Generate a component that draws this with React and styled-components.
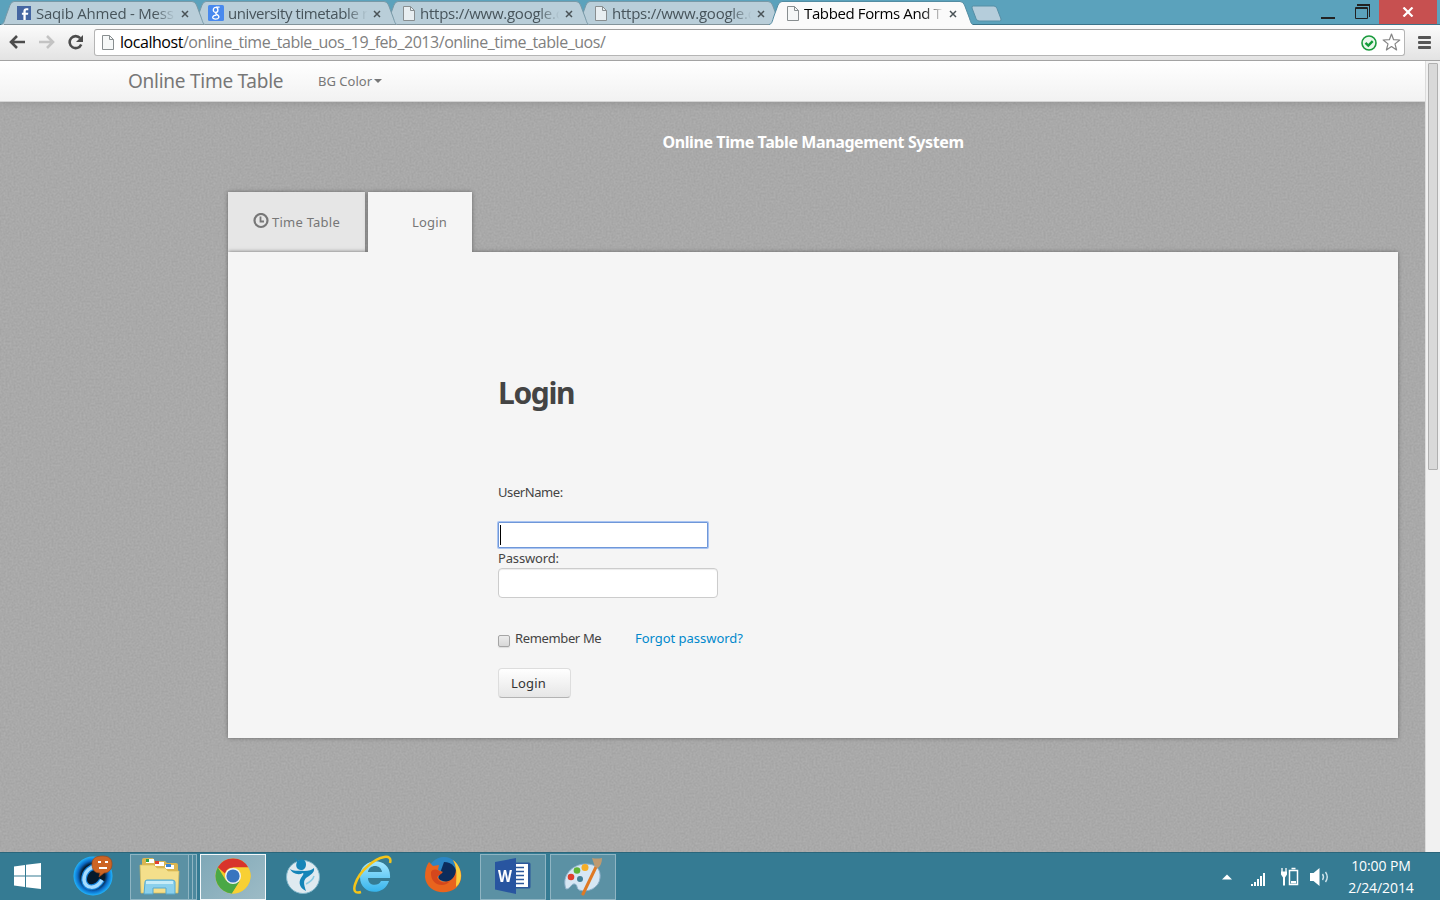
import React from 'react';
import styled, { createGlobalStyle, css } from 'styled-components';

const ui = '"Open Sans", "Noto Sans", sans-serif';
const pt = '"Noto Sans", "Open Sans", sans-serif';

const Global = createGlobalStyle`
  * { box-sizing: border-box; }
  body { margin: 0; overflow: hidden; font-family: ${pt}; }
  button, input { font: inherit; }
`;

const Screen = styled.div`
  width: 1440px;
  height: 900px;
  display: flex;
  flex-direction: column;
  overflow: hidden;
`;

/* ---------- browser chrome ---------- */
const TabStrip = styled.header`
  height: 25px;
  flex: none;
  display: flex;
  padding-left: 1px;
  background: #5ba2bc;
  box-shadow: inset 0 -1px #3c7389;
  position: relative;
`;

const BrowserTab = styled.div`
  position: relative;
  z-index: ${(p) => p.$z};
  width: 204px;
  height: 25px;
  margin-right: -12px;
  padding: 5px 0 4px ${(p) => p.$pad}px;
  display: flex;
  align-items: center;
  font: 15px/16px ${ui};
  letter-spacing: ${(p) => p.$ls}px;
  color: ${(p) => (p.$active ? '#000' : '#47545b')};
`;

const TabShape = styled.svg`
  position: absolute;
  left: 0;
  top: 0;
`;

const TabIcon = styled.span`
  position: relative;
  display: flex;
  flex: none;
  width: ${(p) => p.$w}px;
`;

const TabTitle = styled.span`
  position: relative;
  width: 141px;
  flex: none;
  overflow: hidden;
  white-space: nowrap;
  line-height: 20px;
  margin-top: -1px;
  mask-image: linear-gradient(to right, #000 84%, transparent 99%);
`;

const CloseGlyph = styled.svg`
  position: absolute;
  left: 180px;
  top: 10px;
`;

const NewTab = styled.svg`
  margin: 5px 0 0 9px;
`;

const WindowButtons = styled.div`
  margin-left: auto;
  display: flex;
`;

const WinButton = styled.div`
  display: flex;
  align-items: center;
  justify-content: center;
  width: ${(p) => p.$w}px;
  height: 24px;
  padding-bottom: 1px;
  background: ${(p) => (p.$close ? '#c75050' : 'transparent')};
  margin-right: ${(p) => (p.$close ? 3 : 0)}px;
`;

const Toolbar = styled.div`
  height: 36px;
  flex: none;
  display: flex;
  align-items: center;
  padding: 0 8px 1px 9px;
  background: linear-gradient(#fbfbfb, #e3e3e3);
  border-bottom: 1px solid #a3a3a3;
`;

const NavIcons = styled.div`
  display: flex;
  gap: 12px;
  width: 85px;
  align-items: center;
`;

const Omnibox = styled.div`
  width: 1311px;
  height: 27px;
  display: flex;
  align-items: center;
  padding: 0 3px 0 7px;
  background: #fff;
  border: 1px solid #b5b5b5;
  border-top-color: #a0a0a0;
  border-radius: 3px;
`;

const Url = styled.span`
  font: 16px/24px ${ui};
  color: #808080;
  letter-spacing: -0.455px;
  margin-left: 6px;
  flex: 1;
  b { font-weight: 400; color: #000; }
`;

const OmniIcons = styled.span`
  display: flex;
  align-items: center;
  gap: 5px;
`;

const MenuLines = styled.div`
  width: 13px;
  height: 13px;
  margin-left: 13px;
  display: flex;
  flex-direction: column;
  justify-content: space-between;
  i { height: 3px; border-radius: 1px; background: #555; }
`;

/* ---------- web page ---------- */
const Viewport = styled.div`
  height: 791px;
  flex: none;
  display: flex;
`;

const Page = styled.main`
  width: 1425px;
  position: relative;
  background: #a8a8a8;
  overflow: hidden;
`;

const Texture = styled.svg`
  position: absolute;
  inset: 0;
`;

const Navbar = styled.nav`
  position: relative;
  height: 41px;
  display: flex;
  align-items: center;
  padding-left: 128px;
  background: linear-gradient(#fff, #f2f2f2);
  border-bottom: 1px solid #d4d4d4;
  box-shadow: 0 1px 8px rgba(0, 0, 0, 0.13);
  color: #777;
`;

const Text = styled.span`
  font-size: ${(p) => p.$size || 13}px;
  line-height: 20px;
  letter-spacing: ${(p) => p.$ls || 0}px;
  white-space: nowrap;
`;

const Brand = styled(Text)`
  width: 190px;
`;

const Caret = styled.i`
  border: 4px solid transparent;
  border-top-color: #777;
  border-bottom: 0;
  margin-left: 2px;
`;

const Container = styled.div`
  position: relative;
  width: 1170px;
  margin-left: 228px;
`;

const PageTitle = styled.h1`
  margin: 0;
  padding-top: 30px;
  height: 90px;
  text-align: center;
  color: #fff;
  font: 700 16px/20px ${pt};
  letter-spacing: -0.4px;
`;

const FormTabs = styled.div`
  display: flex;
  gap: 3px;
  height: 60px;
`;

const FormTab = styled.div`
  position: relative;
  z-index: ${(p) => (p.$active ? 2 : 0)};
  width: ${(p) => p.$w}px;
  padding-left: ${(p) => p.$pad}px;
  display: flex;
  align-items: center;
  gap: 3px;
  color: #777;
  background: ${(p) => (p.$active ? '#f5f5f5' : '#e6e6e6')};
  box-shadow: 0 0 4px #666;
  ${(p) => p.$active && css`clip-path: inset(-6px -6px 0 -6px);`}
`;

const Panel = styled.section`
  position: relative;
  z-index: 1;
  height: 486px;
  background: #f5f5f5;
  box-shadow: 0 0 4px #666;
  padding: 121px 0 0 270px;
  display: flex;
  flex-direction: column;
  align-items: flex-start;
  color: #444;
`;

const FormTitle = styled.h2`
  margin: 0 0 69px;
  font: 700 30px/40px ${pt};
  letter-spacing: -1.35px;
`;

const Field = styled.input`
  display: block;
  outline: none;
  background: #fff;
  ${(p) => p.$focus ? css`
    width: 210px;
    height: 26px;
    margin: 20px 0 0;
    border: 1px solid #6f97d8;
    box-shadow: 0 0 0 1px #a9c4f2;
    border-radius: 1px;
  ` : css`
    width: 220px;
    height: 30px;
    border: 1px solid #ccc;
    border-radius: 4px;
    box-shadow: inset 0 1px 1px rgba(0, 0, 0, 0.075);
  `}
`;

const FocusWrap = styled.div`
  position: relative;
  &::after {
    content: '';
    position: absolute;
    left: 2px;
    bottom: 3px;
    width: 1px;
    height: 20px;
    background: #000;
  }
`;

const Options = styled.div`
  margin-top: 30px;
  height: 20px;
  display: flex;
  align-items: center;
`;

const Check = styled.span`
  width: 12px;
  height: 12px;
  margin: 5px 5px 0 0;
  border: 1px solid #a5a5a5;
  border-radius: 2px;
  background: linear-gradient(#ececec, #d8d8d8);
  box-shadow: 0 1px 1px #ddd;
`;

const Remember = styled(Text)`
  width: 120px;
`;

const Forgot = styled(Text)`
  color: #0088cc;
`;

const Submit = styled.button`
  margin-top: 20px;
  width: 73px;
  height: 30px;
  padding: 0 0 0 12px;
  text-align: left;
  font: 13px/20px ${pt};
  letter-spacing: 0.2px;
  color: #333;
  border: 1px solid #ddd;
  border-bottom-color: #b3b3b3;
  border-radius: 4px;
  background: linear-gradient(#fff, #e6e6e6);
`;

const ScrollTrack = styled.aside`
  width: 15px;
  background: #f1f1f1;
  border-left: 1px solid #dcdcdc;
  padding: 2px 2px 0;
`;

const ScrollThumb = styled.div`
  width: 10px;
  height: 407px;
  background: #d9d9d9;
  border: 1px solid #b0b0b0;
  border-radius: 1px;
`;

/* ---------- taskbar ---------- */
const Taskbar = styled.footer`
  height: 48px;
  flex: none;
  display: flex;
  align-items: center;
  background: #357b93;
  border-top: 1px solid #2b667b;
`;

const Slot = styled.div`
  width: ${(p) => p.$w || 70}px;
  height: 47px;
  flex: none;
  padding: ${(p) => p.$inset || '0 5px 3px 0'};
  display: flex;
  align-items: center;
  justify-content: center;
`;

const OpenApp = styled.div`
  width: ${(p) => p.$w || 66}px;
  height: 46px;
  flex: none;
  margin-right: ${(p) => (p.$mr === undefined ? 4 : p.$mr)}px;
  padding-bottom: 2px;
  display: flex;
  align-items: center;
  justify-content: center;
  border: 1px solid ${(p) => (p.$active ? '#f4f8fa' : '#8fb5c3')};
  background: ${(p) => (p.$active ? 'linear-gradient(135deg, #7fa8b7, #9dbbc6)' : '#5b91a4')};
`;

const StackEdge = styled.i`
  width: 4px;
  height: 46px;
  border: 1px solid #8fb5c3;
  border-left: 0;
  background: #4d899e;
  margin-right: ${(p) => p.$mr || 0}px;
`;

const Tray = styled.div`
  margin-left: auto;
  display: flex;
  align-items: center;
  height: 47px;
  padding-right: 24px;
`;

const Clock = styled.div`
  width: 70px;
  margin-left: 16px;
  text-align: center;
  color: #fff;
  font: 14px/22px ${ui};
  letter-spacing: -0.08px;
  white-space: nowrap;
  padding-top: 1px;
`;

const FileIcon = () => (
  <svg width="12" height="15" viewBox="0 0 12 15">
    <path d="M.5.5h7l4 4v10H.5z" fill="#f4f6f6" fillOpacity=".8" stroke="#888e90" />
    <path d="M7.5.5v4h4" fill="none" stroke="#888e90" />
  </svg>
);

const FacebookIcon = () => (
  <svg width="14" height="14" viewBox="0 0 14 14">
    <rect width="14" height="14" fill="#4566a2" />
    <path d="M8.7 14V8.8H11l.3-2.100H8.700V5.400c0-.8.4-1.100 1.100-1.100h1.500V2.300H9.400C7.400 2.300 6.400 3.400 6.400 5.200v1.500H4.900v2.100h1.500V14z" fill="#fff" />
  </svg>
);

const GoogleIcon = () => (
  <svg width="16" height="16" viewBox="0 0 16 16">
    <rect width="16" height="16" rx="1.500" fill="#4889ee" />
    <g fill="none" stroke="#fff" strokeWidth="1.300">
      <ellipse cx="7.600" cy="4.900" rx="2.300" ry="2.500" />
      <path d="M11.600 2.200H8M9 7.200c-2 1-1.300 1.700 0 2.400 3.200 1.800 2 4.600-1.400 4.600-4 0-4-3.800.8-4.100" />
    </g>
  </svg>
);

const tabs = [
  { title: 'Saqib Ahmed - Mess', icon: <FacebookIcon />, iw: 19, pad: 16, ls: -0.22 },
  { title: 'university timetable r', icon: <GoogleIcon />, iw: 20, pad: 15, ls: -0.4 },
  { title: 'https://www.google.c', icon: <FileIcon />, iw: 17, pad: 18, ls: -0.25 },
  { title: 'https://www.google.c', icon: <FileIcon />, iw: 17, pad: 18, ls: -0.25 },
  { title: 'Tabbed Forms And T', icon: <FileIcon />, iw: 17, pad: 18, active: true, ls: -0.38 },
];

const BrowserTabs = () => tabs.map((t, i) => (
  <BrowserTab key={i} $z={t.active ? 9 : 6 - i} $active={t.active} $pad={t.pad} $ls={t.ls}>
    <TabShape width="204" height="25" viewBox="0 0 204 25">
      <path
        d="M0 24.500C3 24 3 22 5 16L9 5Q10.500 1.500 13 1.500H191Q194 1.500 195.500 5L200 17C202 22.500 202 24 204 24.500V25H0Z"
        fill={t.active ? '#fafafa' : '#b9ced9'}
      />
      <path
        d="M0 24.500C3 24 3 22 5 16L9 5Q10.500 1.500 13 1.500H191Q194 1.500 195.500 5L200 17C202 22.500 202 24 204 24.500"
        fill="none"
        stroke={t.active ? '#538ca2' : '#7899a7'}
      />
      {!t.active && <path d="M3 24.500H203" stroke="#82939a" />}
    </TabShape>
    <TabIcon $w={t.iw}>{t.icon}</TabIcon>
    <TabTitle>{t.title}</TabTitle>
    <CloseGlyph width="8" height="8" viewBox="0 0 8 8">
      <path d="M1 1l6 6M7 1L1 7" stroke="#4a5357" strokeWidth="1.500" />
    </CloseGlyph>
  </BrowserTab>
));

const ChromeLogo = () => (
  <svg width="36" height="36" viewBox="0 0 36 36">
    <circle cx="18" cy="18" r="17.500" fill="#f5c927" />
    <path d="M2.800 9.300A17.500 17.500 0 0 1 33.300 9.500H18a8.500 8.500 0 0 0-8 6z" fill="#d8342b" />
    <path d="M2.800 9.300A17.500 17.500 0 0 0 17 35.500L24.500 23.500 11 22.500z" fill="#4aa845" />
    <path d="M18 9.500H33.300A17.500 17.500 0 0 1 17 35.500L25 23z" fill="#f8d034" />
    <circle cx="18" cy="18" r="8" fill="#f0f3f4" />
    <circle cx="18" cy="18" r="6.600" fill="#3875bf" />
  </svg>
);

const CLogo = () => (
  <svg width="42" height="42" viewBox="0 0 42 42">
    <defs>
      <radialGradient id="cring"><stop offset=".6" stopColor="#061a2c" /><stop offset=".78" stopColor="#0b69c4" /><stop offset="1" stopColor="#21b5ff" /></radialGradient>
    </defs>
    <circle cx="20" cy="22" r="19.500" fill="url(#cring)" />
    <path d="M27 14C18 10 11 18 11 26c1 9 12 10 18 0" fill="none" stroke="#1583dc" strokeWidth="6" />
    <path d="M27 14C18 10 11 18 11 26c1 9 12 10 18 0" fill="none" stroke="#a5dcff" strokeWidth="3.500" />
    <path d="M30 2c6 0 9 3 9 8s-3 9-8 9l-5 4 1-4c-5 0-8-3-8-9s4-8 11-8z" fill="#cc6424" stroke="#9c4718" strokeWidth=".7" />
    <path d="M25 8h3M32 8h3M26 14h8" stroke="#fff" strokeWidth="2.200" />
  </svg>
);

const FolderIcon = () => (
  <svg width="42" height="40" viewBox="0 0 42 40">
    <path d="M3 4q0-2 2-2h9l2 3h10l2 2h9q2 0 2 2v26H3z" fill="#dcb650" />
    <path d="M7 3h8v4H7zM16 6h9v4h-9zM26 9h9v4h-9z" fill="#fff" />
    <path d="M7 3h3v3H7z" fill="#33a346" /><path d="M16 5h4v3h-4z" fill="#e0412f" /><path d="M27 8h5v3h-5z" fill="#3a84d2" />
    <path d="M1 9h14l3 3h8l3 3h11l-1 22H2z" fill="#f4df8b" stroke="#d9bb57" strokeWidth=".7" />
    <path d="M6 26q0-2 2-2h25q3 0 3 2v12h-9v-6H14v6H5z" fill="#8bd0ec" stroke="#54a9d0" />
    <path d="M7 25h27v3H7z" fill="#c6ecf8" />
  </svg>
);

const BirdIcon = () => (
  <svg width="36" height="38" viewBox="0 0 36 38">
    <circle cx="18" cy="21" r="16.500" fill="#dfeaf0" stroke="#7fb6ca" />
    <path d="M9 1l4 4c4-3 8-1 8 3s-2 6-5 6c-4 0-6-4-4-8z" fill="#1585b8" />
    <path d="M5 13c5 3 10 1 14 2 5 0 8-1 10-3 1 5-4 7-8 10-3 3-2 7 0 13-6-3-8-8-5-13 2-3 3-4 2-5-5 3-11 0-13-4z" fill="#1585b8" />
    <path d="M21 28c4-2 7-4 8-8" stroke="#8acbe2" strokeWidth="1.500" fill="none" />
  </svg>
);

const IeIcon = () => (
  <svg width="40" height="40" viewBox="0 0 40 40">
    <defs><linearGradient id="ieg" x2="0" y2="1"><stop stopColor="#a5e8ff" /><stop offset="1" stopColor="#36b4ec" /></linearGradient></defs>
    <path d="M37 23H15c0 8 10 9 13 3h8C31 42 7 40 7 22 7 1 39 1 37 23zM15 17h14c-1-8-13-8-14 0z" fill="url(#ieg)" fillRule="evenodd" />
    <path d="M8 37C-5 41 3 21 15 11 26 1 40-2 37 8" fill="none" stroke="#f5c419" strokeWidth="2.500" />
  </svg>
);

const FirefoxIcon = () => (
  <svg width="38" height="38" viewBox="0 0 38 38">
    <circle cx="20" cy="17" r="16" fill="#2b86c4" />
    <path d="M20 6c8 0 13 6 13 14l-9 7-10-4z" fill="#0c2c5c" />
    <path d="M29 4c10 8 11 20 3 28-12 9-30 3-31-11C1 15 2 10 5 6l4 4 6-1-1 5 5 2-5 4c0 5 8 8 14 3 5-5 5-12 1-19z" fill="#e9641e" />
    <path d="M29 4c9 7 11 20 3 27 0-8 2-19-3-27z" fill="#fbcf3d" />
    <path d="M7 16c2-4 7-3 11 1l-5 4c1 5 7 7 13 4-5 7-20 5-19-9z" fill="#d5471c" />
  </svg>
);

const WordGlyph = styled.div`
  position: relative;
  display: flex;
  span {
    position: absolute;
    left: 3px;
    top: 9px;
    color: #fff;
    font: 700 16px/19px ${ui};
    transform: scaleX(0.9);
    transform-origin: left;
  }
`;

const WordIcon = () => (
  <WordGlyph>
    <svg width="36" height="36" viewBox="0 0 36 36">
      <path d="M19 4.500h15q1.500 0 1.500 1.500v23q0 1.500-1.500 1.500H19z" fill="#2b579a" />
      <path d="M20 6h13v23H20z" fill="#fff" />
      <path d="M20 9.500h9M20 13.500h9M20 17.500h9M20 21.500h9M20 25.500h9" stroke="#2b579a" strokeWidth="1.700" />
      <path d="M0 4L21 0v36L0 31.500z" fill="#2855a0" />
    </svg>
    <span>W</span>
  </WordGlyph>
);

const PaintIcon = () => (
  <svg width="40" height="40" viewBox="0 0 40 40">
    <path d="M3 33C-2 20 9 8 23 8c10 0 15 5 14 14-1 10-12 15-21 12-3-2-1-5-4-6-4-1-4 5-9 5z" fill="#d6e7f4" stroke="#8fb1cb" />
    <circle cx="17" cy="23" r="3" fill="#417f97" />
    <circle cx="8" cy="21" r="3.300" fill="#df3e2c" /><circle cx="14" cy="14.500" r="3.300" fill="#5fb336" /><circle cx="22" cy="11.500" r="3.500" fill="#f5ae26" />
    <path d="M33 11L20 38" stroke="#df7a25" strokeWidth="3" strokeLinecap="round" />
    <path d="M32 11L29 2q5 1 10 0 0 7-4 10z" fill="#bd9a70" />
  </svg>
);

export default function App() {
  return (
    <Screen>
      <Global />
      <TabStrip>
        <BrowserTabs />
        <NewTab width="32" height="17" viewBox="0 0 32 17">
          <path d="M3.500 1H24Q26 1 27 3.500L31 14q.5 2-1.500 2H9q-2 0-3-2.500L2 3Q1.500 1 3.500 1z" fill="#b5cddb" stroke="#578fa5" />
        </NewTab>
        <WindowButtons>
          <WinButton $w={34}><svg width="14" height="14"><path d="M0 12h14v2H0z" fill="#222" /></svg></WinButton>
          <WinButton $w={34}>
            <svg width="15" height="15"><path d="M2 0h13v13h-1V2H2z" fill="#222" /><path d="M.5 3.500h12v11H.5zM0 4.500h13" fill="none" stroke="#222" /></svg>
          </WinButton>
          <WinButton $w={58} $close><svg width="12" height="10"><path d="M1.500.5l9 9M10.500.5l-9 9" stroke="#fff" strokeWidth="2.200" /></svg></WinButton>
        </WindowButtons>
      </TabStrip>

      <Toolbar>
        <NavIcons>
          <svg width="17" height="16" viewBox="0 0 17 16"><path d="M16 8H2.500M8 2L2 8l6 6" fill="none" stroke="#4c4c4c" strokeWidth="2.600" /></svg>
          <svg width="17" height="16" viewBox="0 0 17 16"><path d="M1 8h13.500M9 2l6 6-6 6" fill="none" stroke="#c3c3c3" strokeWidth="2.600" /></svg>
          <svg width="17" height="16" viewBox="0 0 17 16"><path d="M13.200 4.200A6 6 0 1 0 14.200 10.500" fill="none" stroke="#4c4c4c" strokeWidth="2.600" /><path d="M16 1v7H9z" fill="#4c4c4c" /></svg>
        </NavIcons>
        <Omnibox>
          <FileIcon />
          <Url><b>localhost</b>/online_time_table_uos_19_feb_2013/online_time_table_uos/</Url>
          <OmniIcons>
            <svg width="17" height="17" viewBox="0 0 17 17"><circle cx="9" cy="9" r="7" fill="#eaf7ec" stroke="#199a3c" strokeWidth="1.600" /><path d="M5.500 8.800l2.800 2.700 4.400-4.300" fill="none" stroke="#119c39" strokeWidth="2.400" /></svg>
            <svg width="19" height="18" viewBox="0 0 19 18"><path d="M9.500 1l2.100 5.700 6.200.3-4.800 3.900 1.600 6.100-5.100-3.500L4.400 17 6 10.900 1.200 7l6.200-.3z" fill="#fff" stroke="#858585" strokeWidth="1.200" strokeLinejoin="round" /></svg>
          </OmniIcons>
        </Omnibox>
        <MenuLines><i /><i /><i /></MenuLines>
      </Toolbar>

      <Viewport>
        <Page>
          <Texture width="1425" height="791">
            <filter id="grain" x="0" y="0" width="100%" height="100%" colorInterpolationFilters="sRGB">
              <feTurbulence type="fractalNoise" baseFrequency="0.5" numOctaves="2" seed="4" />
              <feColorMatrix values="0.08 0 0 0 0.623 0.08 0 0 0 0.623 0.08 0 0 0 0.623 0 0 0 0 1" />
            </filter>
            <rect width="1425" height="791" filter="url(#grain)" />
          </Texture>
          <Navbar>
            <Brand $size={19} $ls={-0.26}>Online Time Table</Brand>
            <Text $ls={0.02}>BG Color</Text>
            <Caret />
          </Navbar>
          <Container>
            <PageTitle>Online Time Table Management System</PageTitle>
            <FormTabs>
              <FormTab $w={137} $pad={25}>
                <svg width="16" height="18" viewBox="0 0 16 18"><circle cx="8" cy="7.500" r="6.500" fill="none" stroke="#777" strokeWidth="2.200" /><path d="M7.500 3.500v5H11" fill="none" stroke="#777" strokeWidth="1.800" /></svg>
                <Text $ls={0.24}>Time Table</Text>
              </FormTab>
              <FormTab $w={104} $pad={44} $active><Text $ls={0.2}>Login</Text></FormTab>
            </FormTabs>
            <Panel>
              <FormTitle>Login</FormTitle>
              <Text $ls={-0.42}>UserName:</Text>
              <FocusWrap><Field $focus aria-label="UserName" /></FocusWrap>
              <Text $ls={-0.15}>Password:</Text>
              <Field type="password" aria-label="Password" />
              <Options>
                <Check />
                <Remember $ls={-0.36}>Remember Me</Remember>
                <Forgot $ls={-0.03}>Forgot password?</Forgot>
              </Options>
              <Submit>Login</Submit>
            </Panel>
          </Container>
        </Page>
        <ScrollTrack><ScrollThumb /></ScrollTrack>
      </Viewport>

      <Taskbar>
        <Slot $w={54} $inset="0 0 2px">
          <svg width="27" height="26" viewBox="0 0 27 26"><path d="M0 3.500L11 2v10.500H0zM12 1.800L27 0v12.500H12zM0 13.500h11V24L0 22.500zM12 13.500h15V26l-15-1.800z" fill="#fff" /></svg>
        </Slot>
        <Slot $w={76} $inset="0 0 3px 4px"><CLogo /></Slot>
        <OpenApp $w={59} $mr={0}><FolderIcon /></OpenApp>
        <StackEdge /><StackEdge $mr={3} />
        <OpenApp $active><ChromeLogo /></OpenApp>
        <Slot><BirdIcon /></Slot>
        <Slot $inset="0 4px 4px 0"><IeIcon /></Slot>
        <Slot><FirefoxIcon /></Slot>
        <OpenApp><WordIcon /></OpenApp>
        <OpenApp><PaintIcon /></OpenApp>
        <Tray>
          <svg width="110" height="24" viewBox="0 0 110 24">
            <path d="M2 14.500l5-5 5 5z" fill="#fff" />
            <path d="M31 19h2v2h-2zM34 17h2v4h-2zM37 14h2v7h-2zM40 11h2v10h-2zM43 8h2v13h-2z" fill="#fff" />
            <path d="M69.500 5.500h8v14h-8zM71.500 3.500h4" fill="none" stroke="#fff" strokeWidth="1.500" /><path d="M71 16h5v2.500h-5z" fill="#fff" />
            <path d="M62 3v4M66 3v4" stroke="#fff" strokeWidth="1.300" /><path d="M61 6.500h6v3l-2 3v8h-2v-8l-2-3z" fill="#fff" />
            <path d="M90 8h3.500l6-5v18l-6-5H90z" fill="#fff" />
            <path d="M102.500 9q2 3 0 6M105.500 7q3.500 5 0 10" fill="none" stroke="#cfe4ec" strokeWidth="1.400" />
          </svg>
          <Clock>10:00 PM<br />2/24/2014</Clock>
        </Tray>
      </Taskbar>
    </Screen>
  );
}
